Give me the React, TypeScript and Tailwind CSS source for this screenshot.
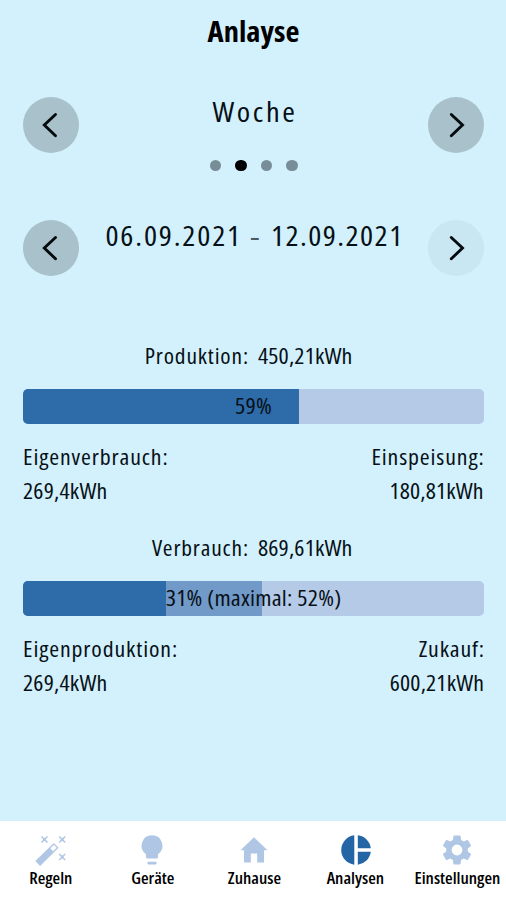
import React from "react";

const font = "font-['Open_Sans','Noto_Sans',sans-serif] [font-stretch:75%]";

function Arrow({ dir, faded }: { dir: "left" | "right"; faded?: boolean }) {
  return (
    <button
      className={`flex size-14 shrink-0 items-center justify-center rounded-full ${faded ? "bg-[#c9e6f3]" : "bg-[#a8c1ca]"}`}
    >
      <svg width="56" height="56" viewBox="0 0 56 56" fill="none" stroke="#050a0c" strokeWidth="2.900" strokeLinecap="round">
        <path d={dir === "left" ? "M32.500 17.500 L21.300 28 L32.500 38.800" : "M23.300 17.500 L34.500 28 L23.300 38.800"} />
      </svg>
    </button>
  );
}

type BarProps = {
  title: string;
  total: string;
  label: string;
  left: [string, string];
  right: [string, string];
  fill: number;
  max?: number;
};

function Section({ title, total, label, left, right, fill, max }: BarProps) {
  return (
    <section className="text-[22px] leading-[34px] tracking-[0.8px]">
      <div className="grid h-[51px] grid-cols-2 gap-[9px]">
        <span className="origin-right scale-x-[1.065] text-right">{title}</span>
        <span className="origin-left scale-x-[1.09] tracking-[0.1px]">{total}</span>
      </div>
      <div className="relative h-[35px] overflow-hidden rounded-[5px] bg-[#b4cae6]">
        {max && <div className="absolute inset-y-0 left-0 bg-[#729ac9]" style={{ width: `${max}%` }} />}
        <div className="absolute inset-y-0 left-0 bg-[#2d6ba9]" style={{ width: `${fill}%` }} />
        <div className="relative scale-x-[1.095] text-center leading-[33px] tracking-[0.2px]">{label}</div>
      </div>
      <div className="mt-[15px] flex justify-between">
        <div className="origin-left scale-x-[1.083]">
          <div>{left[0]}</div>
          <div className="tracking-[0.2px]">{left[1]}</div>
        </div>
        <div className="origin-right scale-x-[1.083] text-right">
          <div className="-mr-[0.8px]">{right[0]}</div>
          <div className="tracking-[0.15px]">{right[1]}</div>
        </div>
      </div>
    </section>
  );
}

function Wand() {
  return (
    <svg className="overflow-visible" width="32" height="32" viewBox="0 0 32 32" fill="none" stroke="#afc6e4">
      <path d="M2.700 29.500 L21.200 11.300" strokeWidth="6.800" strokeLinejoin="round" />
      <path d="M16.700 15.700 L20.300 12.200" stroke="#fff" strokeWidth="4" />
      <path d="M6.500 2.500l6 6m0-6l-6 6M24.200 2.500l6 6m0-6l-6 6M24.200 20l6 6m0-6l-6 6" strokeWidth="1.500" />
      <circle cx="9.500" cy="5.500" r="1.400" fill="#afc6e4" stroke="none" />
      <circle cx="27.200" cy="5.500" r="1.400" fill="#afc6e4" stroke="none" />
      <circle cx="27.200" cy="23" r="1.400" fill="#afc6e4" stroke="none" />
    </svg>
  );
}

function Bulb() {
  return (
    <svg width="32" height="32" viewBox="0 0 32 32" fill="#afc6e4">
      <path d="M16 1.300a10.400 10.400 0 0 0-6 18.900v2.800q0 1.600 1.600 1.600h8.800q1.600 0 1.600-1.600v-2.800A10.400 10.400 0 0 0 16 1.300z" />
      <rect x="11.500" y="27.800" width="9" height="2.700" rx="0.800" />
    </svg>
  );
}

function House() {
  return (
    <svg width="32" height="32" viewBox="0 0 32 32" fill="#afc6e4">
      <path d="M16 3.300 L29.500 16.200H26v12.200h-6.800v-9h-6.400v9H6V16.200H2.500z" />
    </svg>
  );
}

function Pie() {
  return (
    <svg width="32" height="32" viewBox="0 0 32 32" fill="#2465a6">
      <path d="M14.300 1.300v29.400A14.800 14.800 0 0 1 14.300 1.300zM17.800 1.300A14.800 14.800 0 0 1 30.800 14.300h-13zM17.800 17.800h13a14.800 14.800 0 0 1-13 12.900z" />
    </svg>
  );
}

function Gear() {
  return (
    <svg width="36" height="36" viewBox="0 0 24 24" fill="#afc6e4">
      <path d="M19.140 12.940c.04-.3.060-.610.060-.940 0-.320-.020-.640-.070-.940l2.030-1.580a.49.49 0 0 0 .12-.610l-1.920-3.320a.488.488 0 0 0-.590-.220l-2.390.960c-.5-.380-1.030-.7-1.620-.940l-.360-2.540a.484.484 0 0 0-.480-.410h-3.840c-.240 0-.430.170-.470.410l-.360 2.540c-.590.240-1.130.570-1.620.940l-2.390-.960a.48.48 0 0 0-.590.220L2.740 8.870c-.120.210-.080.470.12.610l2.030 1.580c-.050.3-.090.630-.090.940s.020.640.070.940l-2.030 1.580a.49.49 0 0 0-.12.610l1.920 3.320c.12.220.370.290.590.220l2.390-.960c.5.380 1.030.7 1.620.940l.360 2.540c.050.240.240.410.480.410h3.840c.240 0 .440-.170.470-.410l.360-2.540c.590-.240 1.130-.560 1.620-.940l2.390.960c.220.080.470 0 .590-.220l1.920-3.320a.48.48 0 0 0-.12-.610l-2.010-1.580zM12 15.600A3.600 3.600 0 1 1 12 8.400a3.600 3.600 0 0 1 0 7.200z" />
    </svg>
  );
}

const tabs = [
  { name: "Regeln", icon: <Wand /> },
  { name: "Geräte", icon: <Bulb /> },
  { name: "Zuhause", icon: <House /> },
  { name: "Analysen", icon: <Pie /> },
  { name: "Einstellungen", icon: <Gear /> },
];

export default function App() {
  return (
    <div className={`flex h-[900px] w-[506px] flex-col overflow-hidden bg-[#d3f1fd] text-[#061016] ${font}`}>
      <header className="h-[96.5px] pl-px pt-[11px] text-center text-[28px] font-bold leading-[40px] text-black">
        <h1 className="scale-x-[1.09]">Anlayse</h1>
      </header>
      <div className="flex h-[123.500px] justify-between pl-[23px] pr-[22px]">
        <Arrow dir="left" />
        <div className="flex flex-col items-center text-[28px] leading-[32px] tracking-[2.4px]">
          <span className="-mt-[1.500px] ml-[2.5px] scale-x-[1.09]">Woche</span>
          <div className="mt-[32.500px] flex gap-[14px]">
            <i className="size-[11.500px] rounded-full bg-[#778e98]" />
            <i className="size-[11.500px] rounded-full bg-black" />
            <i className="size-[11.500px] rounded-full bg-[#778e98]" />
            <i className="size-[11.500px] rounded-full bg-[#778e98]" />
          </div>
        </div>
        <Arrow dir="right" />
      </div>
      <div className="flex h-[118px] justify-between pl-[23px] pr-[22px]">
        <Arrow dir="left" />
        <div className="-mt-px ml-[3px] flex scale-x-[1.1] whitespace-nowrap text-[28px] leading-[32px] tracking-[1.65px]">
          <span>06.09.2021</span>
          <span className="ml-[8px] mr-[9px] scale-x-[1.15] text-[#4b5a61]">-</span>
          <span className="tracking-[1.3px]">12.09.2021</span>
        </div>
        <Arrow dir="right" faded />
      </div>
      <main className="flex flex-1 flex-col gap-[23px] pl-[23px] pr-[22px]">
        <Section title="Produktion:" total="450,21kWh" label="59%" left={["Eigenverbrauch:", "269,4kWh"]} right={["Einspeisung:", "180,81kWh"]} fill={59.800} />
        <Section title="Verbrauch:" total="869,61kWh" label="31% (maximal: 52%)" left={["Eigenproduktion:", "269,4kWh"]} right={["Zukauf:", "600,21kWh"]} fill={31} max={51.800} />
      </main>
      <nav className="grid h-[79px] w-[508px] shrink-0 grid-cols-5 bg-white text-[16px] font-semibold leading-[24px] text-black">
        {tabs.map((t) => (
          <div key={t.name} className="flex flex-col items-center pt-[12px]">
            <div className="flex h-[33px] items-center justify-center">{t.icon}</div>
            <span className="scale-x-[1.09] whitespace-nowrap">{t.name}</span>
          </div>
        ))}
      </nav>
    </div>
  );
}
